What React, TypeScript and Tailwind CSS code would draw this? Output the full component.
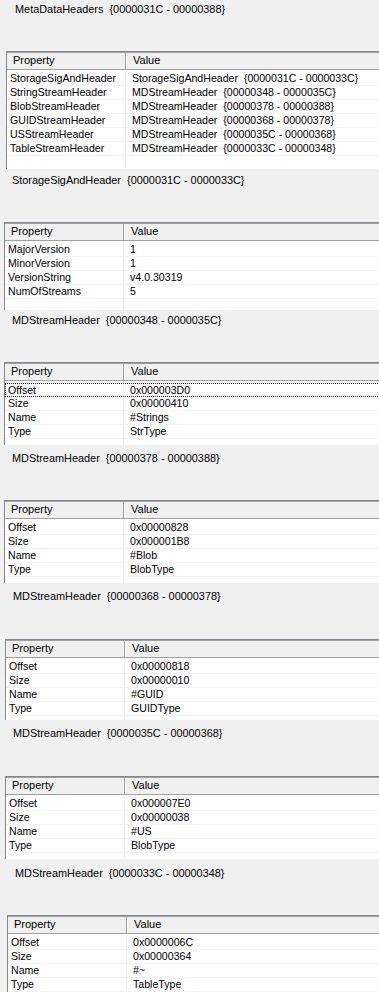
import React from "react";

interface Row {
  name: string;
  value: string;
}

interface Section {
  title: string;
  titleClass: string;
  tableClass: string;
  fillerClass: string;
  focused?: boolean;
  rows: Row[];
}

const stream = (o: string, s: string, n: string, t: string): Row[] => [
  { name: "Offset", value: o },
  { name: "Size", value: s },
  { name: "Name", value: n },
  { name: "Type", value: t },
];

const sections: Section[] = [
  {
    title: "MetaDataHeaders  {0000031C - 00000388}",
    titleClass: "mt-[2px] pl-[15px]",
    tableClass: "mt-[35px] ml-[6px]",
    fillerClass: "h-[13px]",
    rows: [
      { name: "StorageSigAndHeader", value: "StorageSigAndHeader  {0000031C - 0000033C}" },
      { name: "StringStreamHeader", value: "MDStreamHeader  {00000348 - 0000035C}" },
      { name: "BlobStreamHeader", value: "MDStreamHeader  {00000378 - 00000388}" },
      { name: "GUIDStreamHeader", value: "MDStreamHeader  {00000368 - 00000378}" },
      { name: "USStreamHeader", value: "MDStreamHeader  {0000035C - 00000368}" },
      { name: "TableStreamHeader", value: "MDStreamHeader  {0000033C - 00000348}" },
    ],
  },
  {
    title: "StorageSigAndHeader  {0000031C - 0000033C}",
    titleClass: "mt-[4px] pl-[12px]",
    tableClass: "mt-[35px] ml-[4px]",
    fillerClass: "h-[11px]",
    rows: [
      { name: "MajorVersion", value: "1" },
      { name: "MinorVersion", value: "1" },
      { name: "VersionString", value: "v4.0.30319" },
      { name: "NumOfStreams", value: "5" },
    ],
  },
  {
    title: "MDStreamHeader  {00000348 - 0000035C}",
    titleClass: "mt-[3px] pl-[12px]",
    tableClass: "mt-[35px] ml-[4px]",
    fillerClass: "h-[6px]",
    focused: true,
    rows: stream("0x000003D0", "0x00000410", "#Strings", "StrType"),
  },
  {
    title: "MDStreamHeader  {00000378 - 00000388}",
    titleClass: "mt-[6px] pl-[12px]",
    tableClass: "mt-[35px] ml-[4px]",
    fillerClass: "h-[6px]",
    rows: stream("0x00000828", "0x000001B8", "#Blob", "BlobType"),
  },
  {
    title: "MDStreamHeader  {00000368 - 00000378}",
    titleClass: "mt-[6px] pl-[13px]",
    tableClass: "mt-[36px] ml-[5px]",
    fillerClass: "h-[4px]",
    rows: stream("0x00000818", "0x00000010", "#GUID", "GUIDType"),
  },
  {
    title: "MDStreamHeader  {0000035C - 00000368}",
    titleClass: "mt-[6px] pl-[13px]",
    tableClass: "mt-[36px] ml-[5px]",
    fillerClass: "h-[6px]",
    rows: stream("0x000007E0", "0x00000038", "#US", "BlobType"),
  },
  {
    title: "MDStreamHeader  {0000033C - 00000348}",
    titleClass: "mt-[7px] pl-[15px]",
    tableClass: "mt-[35px] ml-[7px]",
    fillerClass: "h-[30px]",
    rows: stream("0x0000006C", "0x00000364", "#~", "TableType"),
  },
];

const PropertyList: React.FC<{ section: Section }> = ({ section }) => (
  <div className={`${section.tableClass} w-[420px] border-l border-t border-[#828790] bg-white`}>
    <div className="flex h-[18px] border-t border-b border-t-[#a0a0a0] border-b-[#a0a0a0] bg-[#f0f0f0] text-[11px] leading-[15px]">
      <div className="w-[119px] shrink-0 border-r border-[#a0a0a0] pl-[6px]">Property</div>
      <div className="flex-1 border-l border-white pl-[6px]">Value</div>
    </div>
    <div className="flex h-[2px]">
      <div className="w-[119px] shrink-0 border-r border-[#f0f0f0]" />
    </div>
    {section.rows.map((row, i) => {
      const focus = section.focused && i === 0;
      return (
        <div
          key={row.name}
          className={`flex h-[14px] leading-[13px] ${
            focus
              ? "border-t border-b border-l border-dotted border-[#222] leading-[12px]"
              : "border-b border-[#f4f4f4]"
          }`}
        >
          <div
            className={`${
              focus ? "w-[118px] pl-[2px]" : "w-[119px] pl-[3px]"
            } shrink-0 border-r border-[#f0f0f0] whitespace-pre`}
          >
            {row.name}
          </div>
          <div className="flex-1 pl-[6px] whitespace-pre">{row.value}</div>
        </div>
      );
    })}
    <div className={`flex ${section.fillerClass}`}>
      <div className="w-[119px] shrink-0 border-r border-[#f0f0f0]" />
    </div>
  </div>
);

export default function App() {
  return (
    <div
      className="h-[992px] w-[379px] overflow-hidden bg-[#f0f0f0] text-[10.6px] text-black"
      style={{ fontFamily: '"Liberation Sans", Arial, sans-serif' }}
    >
      {sections.map((s) => (
        <div key={s.title}>
          <div className={`${s.titleClass} h-[14px] text-[10.9px] leading-[14px] whitespace-pre`}>
            {s.title}
          </div>
          <PropertyList section={s} />
        </div>
      ))}
    </div>
  );
}
